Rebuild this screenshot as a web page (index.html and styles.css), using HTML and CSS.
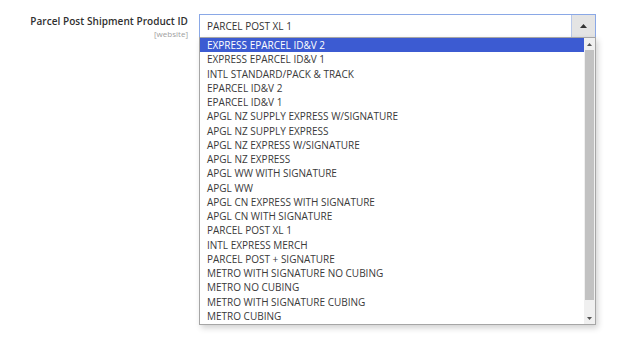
FILE: index.html
```html
<!DOCTYPE html>
<html>
<head>
<meta charset="utf-8">
<link rel="stylesheet" href="styles.css">
</head>
<body>
<div class="row">
  <div class="label">
    <div class="label-main">Parcel Post Shipment Product ID</div>
    <div class="scope">[website]</div>
  </div>
  <div class="control">
    <div class="select">
      <span class="value">PARCEL POST XL 1</span>
      <span class="btn"><svg width="7" height="4" viewBox="0 0 7 4"><path d="M0 4 L3.5 0 L7 4 Z" fill="#333"/></svg></span>
    </div>
    <div class="dropdown">
      <ul class="list">
        <li class="active">EXPRESS EPARCEL ID&amp;V 2</li>
        <li>EXPRESS EPARCEL ID&amp;V 1</li>
        <li>INTL STANDARD/PACK &amp; TRACK</li>
        <li>EPARCEL ID&amp;V 2</li>
        <li>EPARCEL ID&amp;V 1</li>
        <li>APGL NZ SUPPLY EXPRESS W/SIGNATURE</li>
        <li>APGL NZ SUPPLY EXPRESS</li>
        <li>APGL NZ EXPRESS W/SIGNATURE</li>
        <li>APGL NZ EXPRESS</li>
        <li>APGL WW WITH SIGNATURE</li>
        <li>APGL WW</li>
        <li>APGL CN EXPRESS WITH SIGNATURE</li>
        <li>APGL CN WITH SIGNATURE</li>
        <li>PARCEL POST XL 1</li>
        <li>INTL EXPRESS MERCH</li>
        <li>PARCEL POST + SIGNATURE</li>
        <li>METRO WITH SIGNATURE NO CUBING</li>
        <li>METRO NO CUBING</li>
        <li>METRO WITH SIGNATURE CUBING</li>
        <li>METRO CUBING</li>
      </ul>
      <div class="scrollbar">
        <div class="arrow"><svg width="5" height="3" viewBox="0 0 5 3"><path d="M0 3 L2.5 0 L5 3 Z" fill="#555"/></svg></div>
        <div class="track"><div class="thumb"></div></div>
        <div class="arrow"><svg width="5" height="3" viewBox="0 0 5 3"><path d="M0 0 L2.5 3 L5 0 Z" fill="#555"/></svg></div>
      </div>
    </div>
  </div>
</div>
</body>
</html>
```
FILE: styles.css
```css
* { box-sizing: border-box; }
html, body { margin: 0; padding: 0; background: #fff; }
body {
  font-family: "Open Sans", "Noto Sans", sans-serif;
  color: #303030;
  width: 624px;
  height: 360px;
  overflow: hidden;
}
.row {
  display: flex;
  padding-top: 14px;
}
.label {
  width: 199px;
  padding-right: 11px;
  text-align: right;
  padding-top: 1px;
  white-space: nowrap;
}
.label-main {
  font-size: 10px;
  font-weight: 600;
  line-height: 13px;
  letter-spacing: 0.05px;
  color: #303030;
}
.scope {
  font-size: 8px;
  line-height: 9px;
  margin-top: 1px;
  color: #a0a0a0;
}
.control {
  width: 397px;
  display: flex;
  flex-direction: column;
}
.select {
  height: 23px;
  border: 1px solid #8aa8e6;
  border-bottom: none;
  display: flex;
  align-items: stretch;
}
.value {
  flex: 1;
  font-size: 10px;
  line-height: 22px;
  padding-left: 7px;
  color: #333;
}
.btn {
  width: 24px;
  background: #e4e4e4;
  border-left: 1px solid #b8c8ea;
  display: flex;
  align-items: center;
  justify-content: center;
}
.dropdown {
  height: 288px;
  border: 1px solid #a6a6a6;
  display: flex;
  box-shadow: 2px 3px 6px rgba(0,0,0,0.18);
  background: #fff;
}
.list {
  list-style: none;
  margin: 0;
  padding: 0;
  flex: 1;
}
.list li {
  height: 14.25px;
  line-height: 14.25px;
  font-size: 10px;
  padding-left: 7px;
  color: #3a3a3a;
  white-space: nowrap;
}
.list li.active {
  background: #3c5bd2;
  color: #fff;
}
.scrollbar {
  width: 11px;
  background: #f0f0f0;
  display: flex;
  flex-direction: column;
  padding: 0 1px;
}
.arrow {
  height: 12px;
  display: flex;
  align-items: center;
  justify-content: center;
}
.track {
  flex: 1;
  display: flex;
  flex-direction: column;
}
.thumb {
  height: 250px;
  background: #c2c2c2;
}
```
